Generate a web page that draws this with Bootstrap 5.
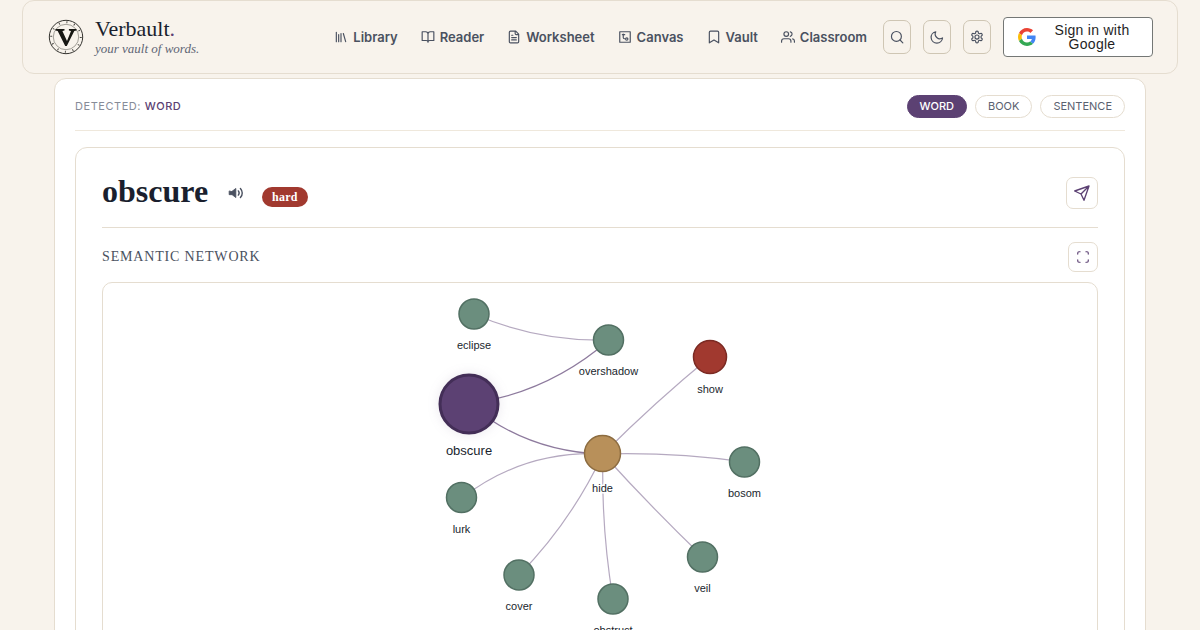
<!DOCTYPE html>
<html lang="en">
<head>
<meta charset="utf-8">
<meta name="viewport" content="width=device-width, initial-scale=1">
<title>Verbault</title>
<link href="https://cdn.jsdelivr.net/npm/bootstrap@5.3.0/dist/css/bootstrap.min.css" rel="stylesheet">
<style>
:root{--paper:#f8f3ec;--line:#e5ddd0;--ink:#1a1f2e;--slate:#4a5160;--plum:#5c4173}
body{background:var(--paper);color:var(--ink);font-family:Inter,"Liberation Sans",sans-serif}
svg{flex-shrink:0}
.serif{font-family:"Liberation Serif",serif}
.site-header{margin:0 22px 4px;padding:16px 24px 16px 25px;border:1px solid var(--line);border-radius:12px}
.brand{color:var(--ink);gap:11px}
.brand-name{font-size:22px;line-height:23px}
.brand-name span{color:var(--plum)}
.brand-tag{font-size:13px;line-height:17px;font-style:italic;color:#5f6675}
.site-nav{gap:23px;margin-right:16px}
.site-nav a{display:flex;align-items:center;gap:5px;font-size:13px;line-height:20px;font-weight:600;color:var(--slate);text-decoration:none}
.tools{gap:12px}
.tool-btn{width:28px;height:34px;border:1px solid #cfc6b4;border-radius:7px;background:none;color:var(--slate)}
.google-btn{width:150px;height:40px;border:1px solid #747775;border-radius:4px;background:#fff;color:#1f1f1f;font-family:"Liberation Sans",sans-serif;font-size:14px;line-height:14px;letter-spacing:.02em;padding:0 12px 0 14px}
.sheet{margin:0 54px;padding:16px 20px;background:#fff;border:1px solid var(--line);border-radius:12px 12px 0 0}
.modes{padding-bottom:12px;margin-bottom:16px;border-bottom:1px solid #efe8dc}
.detected{padding-bottom:2px;font-size:11px;line-height:16px;letter-spacing:.05em;color:#878c98}
.detected strong{font-weight:500;color:var(--plum)}
.pill{height:23px;padding:0 12px 2px;border:1px solid var(--line);border-radius:12px;background:#fff;color:#5a6170;font-size:11px;line-height:16px}
.pill.active{background:var(--plum);border-color:var(--plum);color:#fff;font-weight:500}
.entry{padding:29px 26px;border:1px solid var(--line);border-radius:12px}
.entry-head{padding-bottom:18px;margin-bottom:14px;border-bottom:1px solid var(--line)}
.entry-word{padding-bottom:4px;font-size:32px;line-height:28px;font-weight:700}
.listen-btn{margin:0 17px}
.level{margin-top:8px;padding:0 10px;border-radius:10px;background:#a1392f;color:#fff;font-size:12px;line-height:20px;font-weight:700;letter-spacing:.02em}
.square-btn{border:1px solid var(--line);border-radius:7px;background:#fff;color:var(--plum)}
.send-btn{width:32px;height:32px}
.full-btn{width:30px;height:30px}
.section-title{font-size:14px;line-height:20px;font-weight:400;letter-spacing:.06em;color:var(--slate)}
.graph-box{margin-top:10px;border:1px solid var(--line);border-radius:10px}
.graph{font-family:"Liberation Sans",sans-serif;font-size:11px;text-anchor:middle}
.graph path{fill:none;stroke:var(--plum);stroke-width:1.2;opacity:.45}
.graph .strong{opacity:.7}
.graph circle{fill:#6b8e7e;stroke:#527063;stroke-width:1.5}
.graph .root{fill:var(--plum);stroke:#432e57;stroke-width:3;filter:drop-shadow(0 0 6px rgba(92,65,115,.12))}
.graph .hub{fill:#b8905a;stroke:#8c6c40}
.graph .far{fill:#a1392f;stroke:#7b2a23}
.graph text{fill:var(--ink);stroke:#fff;stroke-width:3;paint-order:stroke}
.graph .root-label{font-size:13px}
.ico{fill:none;stroke:currentColor;stroke-width:2;stroke-linecap:round;stroke-linejoin:round}
</style>
<script src="https://cdn.jsdelivr.net/npm/bootstrap@5.3.0/dist/js/bootstrap.bundle.min.js"></script>
</head>
<body>
<div class="vh-100 overflow-hidden">
<header class="site-header d-flex align-items-center">
  <a href="#" class="brand d-flex align-items-center text-decoration-none me-auto">
    <svg width="36" height="36" viewBox="0 0 36 36" fill="none" stroke="#33322e" aria-hidden="true">
      <circle cx="18" cy="18" r="16.700"/>
      <circle cx="18" cy="18" r="14.800" stroke="#4b4a45" stroke-width="2" stroke-dasharray="1 6.750"/>
      <circle cx="18" cy="18" r="12.700" stroke="#8b8982" stroke-width=".8"/>
      <path d="M7.500 10h9v1.400l-2.100.600 4.600 9.900 4-9.800-2.100-.700V10H28.500v1.400l-2.200.600L18.800 27h-1.600L9.700 12l-2.200-.600z" fill="#171713" stroke="none"/>
    </svg>
    <span class="serif d-flex flex-column">
      <span class="brand-name">Verbault<span>.</span></span>
      <span class="brand-tag">your vault of words.</span>
    </span>
  </a>
  <nav class="site-nav d-flex" aria-label="Main">
    <a href="#"><svg class="ico" width="14" height="14" viewBox="0 0 24 24"><path d="m16 6 4 14M12 6v14M8 8v12M4 4v16"/></svg>Library</a>
    <a href="#"><svg class="ico" width="14" height="14" viewBox="0 0 24 24"><path d="M2 3h6a4 4 0 0 1 4 4v14a3 3 0 0 0-3-3H2zM22 3h-6a4 4 0 0 0-4 4v14a3 3 0 0 1 3-3h7z"/></svg>Reader</a>
    <a href="#"><svg class="ico" width="14" height="14" viewBox="0 0 24 24"><path d="M15 2H6a2 2 0 0 0-2 2v16a2 2 0 0 0 2 2h12a2 2 0 0 0 2-2V7zM14 2v4a2 2 0 0 0 2 2h4M10 9H8M16 13H8M16 17H8"/></svg>Worksheet</a>
    <a href="#"><svg class="ico" width="14" height="14" viewBox="0 0 24 24"><path d="M3 3h18v18H3z"/><path d="M7.500 8h4M9 7v6a2 2 0 0 0 2 2h1"/><circle cx="15" cy="15.500" r="2"/></svg>Canvas</a>
    <a href="#"><svg class="ico" width="14" height="14" viewBox="0 0 24 24"><path d="m20 22-8-5-8 5V4a2 2 0 0 1 2-2h12a2 2 0 0 1 2 2z"/></svg>Vault</a>
    <a href="#"><svg class="ico" width="14" height="14" viewBox="0 0 24 24"><path d="M17 21v-2a4 4 0 0 0-4-4H5a4 4 0 0 0-4 4v2M23 21v-2a4 4 0 0 0-3-3.870M16 3.130a4 4 0 0 1 0 7.750"/><circle cx="9" cy="7" r="4"/></svg>Classroom</a>
  </nav>
  <div class="tools d-flex align-items-center">
    <button type="button" class="tool-btn p-0 d-flex align-items-center justify-content-center" aria-label="Search"><svg class="ico" width="14" height="14" viewBox="0 0 24 24"><circle cx="11" cy="11" r="8.500"/><path d="m22 22-4.800-4.800"/></svg></button>
    <button type="button" class="tool-btn p-0 d-flex align-items-center justify-content-center" aria-label="Dark mode"><svg class="ico" width="14" height="14" viewBox="0 0 24 24"><path d="M10 3a8 8 0 0 0 11.500 10.500A9.800 9.800 0 1 1 10 3z"/></svg></button>
    <button type="button" class="tool-btn p-0 d-flex align-items-center justify-content-center" aria-label="Settings"><svg class="ico" width="14" height="14" viewBox="0 0 24 24"><path d="M12.220 2h-.440a2 2 0 0 0-2 2v.180a2 2 0 0 1-1 1.730l-.430.250a2 2 0 0 1-2 0l-.150-.080a2 2 0 0 0-2.730.730l-.220.380a2 2 0 0 0 .730 2.730l.150.100a2 2 0 0 1 1 1.720v.510a2 2 0 0 1-1 1.740l-.150.090a2 2 0 0 0-.730 2.730l.220.380a2 2 0 0 0 2.730.730l.150-.080a2 2 0 0 1 2 0l.430.250a2 2 0 0 1 1 1.730V20a2 2 0 0 0 2 2h.440a2 2 0 0 0 2-2v-.180a2 2 0 0 1 1-1.730l.430-.250a2 2 0 0 1 2 0l.150.080a2 2 0 0 0 2.730-.730l.220-.390a2 2 0 0 0-.730-2.730l-.150-.080a2 2 0 0 1-1-1.740v-.500a2 2 0 0 1 1-1.740l.150-.090a2 2 0 0 0 .730-2.730l-.220-.380a2 2 0 0 0-2.730-.730l-.150.080a2 2 0 0 1-2 0l-.430-.250a2 2 0 0 1-1-1.730V4a2 2 0 0 0-2-2z"/><circle cx="12" cy="12" r="3.500"/></svg></button>
    <button type="button" class="google-btn d-flex align-items-center">
      <svg width="18" height="18" viewBox="0 0 48 48" aria-hidden="true"><path fill="#EA4335" d="M24 9.500c3.540 0 6.710 1.220 9.210 3.600l6.850-6.850C35.900 2.380 30.470 0 24 0 14.620 0 6.510 5.380 2.560 13.220l7.980 6.190C12.430 13.720 17.740 9.500 24 9.500z"/><path fill="#4285F4" d="M46.980 24.550c0-1.570-.15-3.090-.38-4.550H24v9.020h12.940c-.58 2.960-2.260 5.480-4.780 7.180l7.730 6c4.510-4.180 7.090-10.360 7.090-17.650z"/><path fill="#FBBC05" d="M10.530 28.590c-.48-1.450-.76-2.990-.76-4.590s.27-3.140.76-4.590l-7.980-6.190C.92 16.460 0 20.120 0 24c0 3.880.92 7.540 2.560 10.780l7.970-6.190z"/><path fill="#34A853" d="M24 48c6.480 0 11.930-2.130 15.890-5.810l-7.730-6c-2.150 1.450-4.920 2.300-8.160 2.300-6.260 0-11.570-4.220-13.470-9.910l-7.980 6.190C6.510 42.620 14.620 48 24 48z"/></svg>
      <span class="flex-grow-1 ps-2">Sign in with Google</span>
    </button>
  </div>
</header>

<main class="sheet">
  <div class="modes d-flex align-items-center justify-content-between">
    <div class="detected">DETECTED: <strong>WORD</strong></div>
    <div class="d-flex gap-2">
      <button type="button" class="pill active">WORD</button>
      <button type="button" class="pill">BOOK</button>
      <button type="button" class="pill">SENTENCE</button>
    </div>
  </div>

  <article class="entry">
    <div class="entry-head d-flex align-items-center">
      <h1 class="entry-word serif mb-0">obscure</h1>
      <button type="button" class="listen-btn btn p-0 border-0 d-flex" aria-label="Listen"><svg width="20" height="20" viewBox="0 0 24 24" fill="none" stroke="#4a5160" stroke-width="1.700" stroke-linecap="round"><path d="M5 10v4h3.500l4.500 3.500v-11L8.500 10z" fill="#4a5160" stroke-width="1"/><path d="M16 9.500a4 4 0 0 1 0 5M18.500 6.500a8 8 0 0 1 0 11"/></svg></button>
      <span class="level serif">hard</span>
      <button type="button" class="square-btn send-btn p-0 ms-auto d-flex align-items-center justify-content-center" aria-label="Send"><svg class="ico" width="16" height="16" viewBox="0 0 24 24"><path d="M22.500 1.500 15 23l-4.500-9.500L1 9zM22.500 1.500l-12 12"/></svg></button>
    </div>
    <div class="d-flex align-items-center justify-content-between">
      <h2 class="section-title serif mb-0">SEMANTIC NETWORK</h2>
      <button type="button" class="square-btn full-btn p-0 d-flex align-items-center justify-content-center" aria-label="Full screen"><svg class="ico" width="14" height="14" viewBox="0 0 24 24"><path d="M7 3H5a2 2 0 0 0-2 2v2M21 7V5a2 2 0 0 0-2-2h-2M3 17v2a2 2 0 0 0 2 2h2M17 21h2a2 2 0 0 0 2-2v-2"/></svg></button>
    </div>
    <div class="graph-box d-flex justify-content-center">
      <svg class="graph" width="400" height="420" viewBox="0 0 400 420" role="img" aria-label="Words related to obscure">
        <path d="M74 31Q138 59 209 57"/>
        <path class="strong" d="M69 121Q148 110 209 57"/>
        <path class="strong" d="M69 121Q127 169 203 171"/>
        <path d="M203 171Q124 167 62 215"/>
        <path d="M203 171Q171 239 119 292"/>
        <path d="M203 171Q201 244 213 316"/>
        <path d="M203 171Q251 224 303 274"/>
        <path d="M203 171Q255 119 310 74"/>
        <path d="M203 171Q274 169 345 179"/>
        <circle cx="74" cy="31" r="15"/><text x="74" y="66">eclipse</text>
        <circle cx="208.500" cy="57" r="15"/><text x="208.500" y="92">overshadow</text>
        <circle class="root" cx="69" cy="121" r="29"/><text class="root-label" x="69" y="172">obscure</text>
        <circle class="hub" cx="202.500" cy="170.500" r="18"/><text x="202.500" y="209">hide</text>
        <circle class="far" cx="310" cy="74" r="16.500"/><text x="310" y="110">show</text>
        <circle cx="61.500" cy="214.500" r="15"/><text x="61.500" y="250">lurk</text>
        <circle cx="119" cy="292" r="15"/><text x="119" y="327">cover</text>
        <circle cx="213" cy="316" r="15"/><text x="213" y="351">obstruct</text>
        <circle cx="302.500" cy="274" r="15"/><text x="302.500" y="309">veil</text>
        <circle cx="344.500" cy="179" r="15"/><text x="344.500" y="214">bosom</text>
      </svg>
    </div>
  </article>
</main>
</div>
</body>
</html>
